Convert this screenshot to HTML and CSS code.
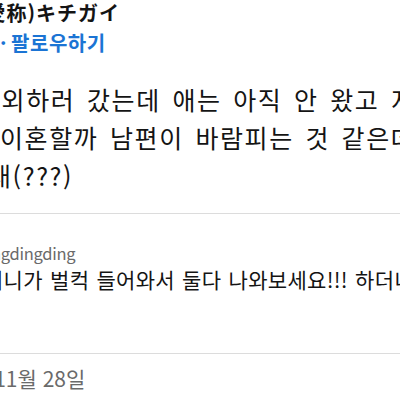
FILE: index.html
```html
<!DOCTYPE html>
<html lang="ko">
<head>
<meta charset="utf-8">
<link rel="stylesheet" href="styles.css">
</head>
<body>
<div class="tweet">
  <div class="head">
    <div class="name">(愛称)キチガイ</div>
    <div class="follow">· 팔로우하기</div>
  </div>
  <div class="body">
    <p class="l1">교외하러 갔는데 애는 아직 안 왔고 지</p>
    <p class="l2">이혼할까 남편이 바람피는 것 같은데</p>
    <p class="l3">래(???)</p>
  </div>
  <div class="quote">
    <div class="qname">ngdingding</div>
    <div class="qtext">머니가 벌컥 들어와서 둘다 나와보세요!!! 하더니</div>
  </div>
  <div class="date">년 11월 28일</div>
</div>
</body>
</html>
```
FILE: styles.css
```css
html, body {
  margin: 0;
  padding: 0;
  background: #fff;
  overflow: hidden;
  width: 400px;
  height: 400px;
}
.tweet {
  font-family: "Noto Sans CJK KR", "Noto Sans", sans-serif;
  color: #141414;
  white-space: nowrap;
}
.name {
  font-size: 20px;
  font-weight: 700;
  line-height: 26px;
  letter-spacing: 1px;
  text-indent: -23px;
}
.follow {
  font-size: 20px;
  font-weight: 700;
  color: #1b74d4;
  line-height: 26px;
  letter-spacing: 0.5px;
  word-spacing: -2px;
  text-indent: 0;
  margin-top: 4px;
}
.body {
  margin-top: 24px;
  font-size: 25px;
  line-height: 38px;
  letter-spacing: 1.6px;
  word-spacing: 3px;
}
.body p {
  margin: 0;
}
.l1 { text-indent: -23px; }
.l2 { text-indent: 0; }
.l3 { text-indent: -12px; }
.quote {
  margin-top: 19px;
  border-top: 1px solid #dcdcdc;
  border-bottom: 1px solid #dcdcdc;
  padding: 26px 0 61px;
}
.qname {
  font-size: 16.5px;
  color: #6a6a6a;
  line-height: 26px;
  letter-spacing: -0.3px;
  text-indent: -9px;
}
.qtext {
  font-size: 21px;
  line-height: 26px;
  letter-spacing: 0.3px;
  word-spacing: 1px;
  text-indent: -16px;
}
.date {
  font-size: 21px;
  color: #6a6a6a;
  line-height: 30px;
  margin-top: 9px;
  text-indent: -31px;
}
```
